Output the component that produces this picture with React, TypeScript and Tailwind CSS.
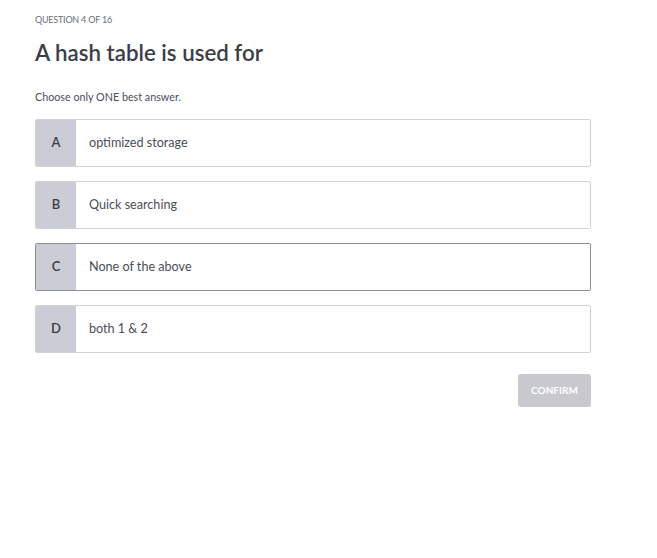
import React from "react";

const options = [
  { letter: "A", text: "optimized storage", active: false },
  { letter: "B", text: "Quick searching", active: false },
  { letter: "C", text: "None of the above", active: true },
  { letter: "D", text: "both 1 & 2", active: false },
];

export default function App() {
  return (
    <div
      className="w-[657px] h-[558px] bg-white text-[#3c3f4b]"
      style={{ fontFamily: "Lato, 'Noto Sans', sans-serif" }}
    >
      <div className="pl-[35px] pr-[66px] pt-[14px]">
        <div className="text-[9px] leading-[12px] text-[#6b6e7a] tracking-tight">QUESTION 4 OF 16</div>
        <h1 className="mt-[13px] text-[22.3px] leading-[28px] font-semibold text-[#3a3d49]">
          A hash table is used for
        </h1>
        <p className="mt-[23px] text-[10.75px] leading-[14px] text-[#4a4d59]">Choose only ONE best answer.</p>
        <div className="mt-[15px] flex flex-col gap-[14px]">
          {options.map((o) => (
            <div
              key={o.letter}
              className={`flex h-[48px] rounded-[2px] overflow-hidden border ${
                o.active ? "border-[#8c8e99]" : "border-[#d2d3da]"
              }`}
            >
              <div className="w-[40px] bg-[#cacdd6] flex items-center justify-center text-[13px] font-semibold text-[#3a3d49]">
                {o.letter}
              </div>
              <div className="flex items-center pl-[13px] text-[12.6px] text-[#4a4d59]">{o.text}</div>
            </div>
          ))}
        </div>
        <div className="mt-[21px] flex justify-end">
          <button className="w-[73px] h-[33px] rounded-[3px] bg-[#c8c9cf] text-white text-[10px] font-bold">
            CONFIRM
          </button>
        </div>
      </div>
    </div>
  );
}
